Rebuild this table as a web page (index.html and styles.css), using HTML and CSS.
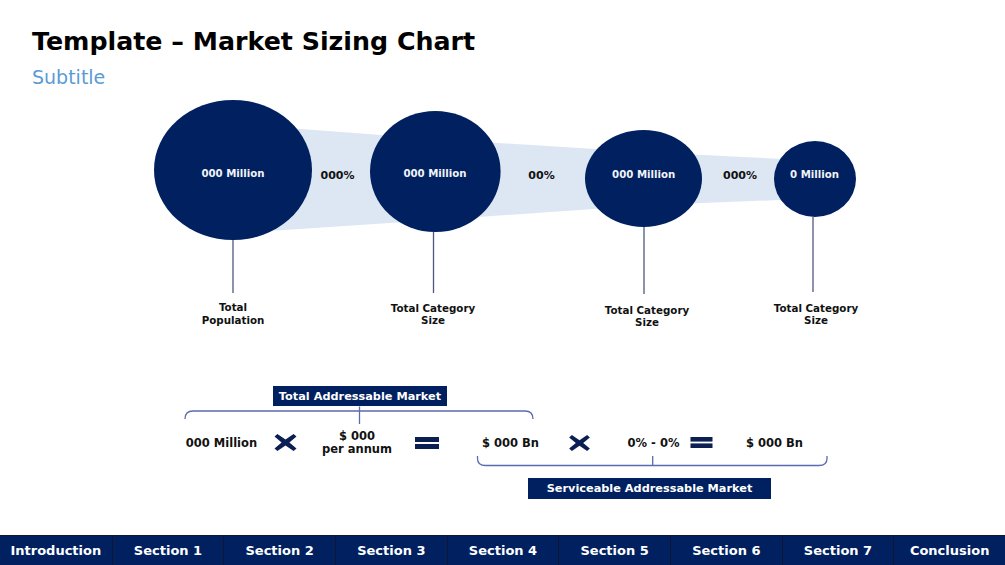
FILE: index.html
```html
<!DOCTYPE html>
<html lang="en">
<head>
<meta charset="utf-8">
<title>Template – Market Sizing Chart</title>
<link rel="stylesheet" href="styles.css">
</head>
<body>
<div class="slide">
  <header class="head">
    <h1 class="title">Template – Market Sizing Chart</h1>
    <p class="subtitle">Subtitle</p>
  </header>

  <div class="funnel">
    <svg class="funnel-svg" width="1005" height="250" viewBox="0 92 1005 250" xmlns="http://www.w3.org/2000/svg">
      <polygon class="band" points="233,124 435,139 643,152 815,160.6 815,198.5 643,205.5 435,220 233,233.5"/>
      <line class="stem" x1="233" y1="240" x2="233" y2="293"/>
      <line class="stem" x1="433.5" y1="232" x2="433.5" y2="293"/>
      <line class="stem" x1="644" y1="227" x2="644" y2="294"/>
      <line class="stem" x1="813" y1="217" x2="813" y2="292"/>
      <ellipse class="node" cx="233" cy="170" rx="79" ry="70"/>
      <ellipse class="node" cx="435.3" cy="171.5" rx="65.3" ry="60.5"/>
      <ellipse class="node" cx="643.5" cy="178.5" rx="58.5" ry="48.5"/>
      <ellipse class="node" cx="815" cy="179" rx="41" ry="38"/>
      <text class="val" x="233" y="177.3">000 Million</text>
      <text class="val" x="435" y="177.3">000 Million</text>
      <text class="val" x="643.7" y="178">000 Million</text>
      <text class="val" x="814.5" y="178">0 Million</text>
      <text class="pct" x="337.5" y="178.5">000%</text>
      <text class="pct" x="541.5" y="178.5">00%</text>
      <text class="pct" x="740" y="178.5">000%</text>
      <text class="lbl" x="233" y="311">Total</text>
      <text class="lbl" x="233" y="323.5">Population</text>
      <text class="lbl" x="433" y="312">Total Category</text>
      <text class="lbl" x="433" y="324.3">Size</text>
      <text class="lbl" x="647" y="313.7">Total Category</text>
      <text class="lbl" x="647" y="326">Size</text>
      <text class="lbl" x="816" y="312">Total Category</text>
      <text class="lbl" x="816" y="324.3">Size</text>
    </svg>
  </div>

  <section class="formula">
    <div class="tag-row">
      <div class="tag tag-tam">Total Addressable Market</div>
    </div>
    <svg class="bracket bracket-top" width="1005" height="22" viewBox="0 406 1005 22" xmlns="http://www.w3.org/2000/svg">
      <path class="brace" d="M185,419 Q185,411 193,411 L525,411 Q533,411 533,419"/>
      <path class="brace" d="M359.5,406.5 V424"/>
    </svg>
    <div class="terms">
      <div class="term term-1">000 Million</div>
      <svg class="op op-x op-x1" width="23" height="17" viewBox="0 0 23 17" xmlns="http://www.w3.org/2000/svg">
        <path class="op-fill" d="M0.5,2.6 L3.4,0 L11.5,5.6 L19.6,0 L22.5,2.6 L15.4,8.5 L22.5,14.4 L19.6,17 L11.5,11.4 L3.4,17 L0.5,14.4 L7.6,8.5 Z"/>
      </svg>
      <div class="term term-3"><span class="term-line">$ 000</span><span class="term-line">per annum</span></div>
      <svg class="op op-eq op-eq1" width="24" height="12" viewBox="0 0 24 12" xmlns="http://www.w3.org/2000/svg">
        <rect class="op-fill" x="0" y="0" width="24" height="5"/>
        <rect class="op-fill" x="0" y="7" width="24" height="5"/>
      </svg>
      <div class="term term-5">$ 000 Bn</div>
      <svg class="op op-x op-x2" width="23" height="16" viewBox="0 0 23 17" xmlns="http://www.w3.org/2000/svg">
        <path class="op-fill" d="M0.5,2.6 L3.4,0 L11.5,5.6 L19.6,0 L22.5,2.6 L15.4,8.5 L22.5,14.4 L19.6,17 L11.5,11.4 L3.4,17 L0.5,14.4 L7.6,8.5 Z"/>
      </svg>
      <div class="term term-7">0% - 0%</div>
      <svg class="op op-eq op-eq2" width="23" height="11" viewBox="0 0 24 12" xmlns="http://www.w3.org/2000/svg">
        <rect class="op-fill" x="0" y="0" width="24" height="5"/>
        <rect class="op-fill" x="0" y="7" width="24" height="5"/>
      </svg>
      <div class="term term-9">$ 000 Bn</div>
    </div>
    <svg class="bracket bracket-bottom" width="1005" height="12" viewBox="0 456 1005 12" xmlns="http://www.w3.org/2000/svg">
      <path class="brace" d="M477.5,456 L477.5,458.5 Q477.5,465.5 485.5,465.5 L819,465.5 Q827,465.5 827,458.5 L827,456"/>
      <path class="brace" d="M652.7,456 V465.5"/>
    </svg>
    <div class="tag-row tag-row-sam">
      <div class="tag tag-sam">Serviceable Addressable Market</div>
    </div>
  </section>

  <nav class="nav">
    <div class="nav-item">Introduction</div>
    <div class="nav-item">Section 1</div>
    <div class="nav-item">Section 2</div>
    <div class="nav-item">Section 3</div>
    <div class="nav-item">Section 4</div>
    <div class="nav-item">Section 5</div>
    <div class="nav-item">Section 6</div>
    <div class="nav-item">Section 7</div>
    <div class="nav-item">Conclusion</div>
  </nav>
</div>
</body>
</html>
```

FILE: styles.css
```css
* {
  box-sizing: border-box;
}

html, body {
  margin: 0;
  padding: 0;
  background: #ffffff;
}

body {
  font-family: "DejaVu Sans", Verdana, sans-serif;
  color: #111111;
}

.slide {
  width: 1005px;
  height: 565px;
  display: flex;
  flex-direction: column;
  overflow: hidden;
}

/* header */
.head {
  padding: 27px 0 0 32px;
}

.title {
  margin: 0;
  font-size: 25.3px;
  line-height: 30px;
  font-weight: bold;
  color: #000000;
}

.subtitle {
  margin: 8px 0 0 0;
  font-size: 19px;
  line-height: 24px;
  color: #5b9bd5;
}

/* funnel diagram */
.funnel {
  margin-top: 3px;
  height: 250px;
}

.funnel-svg {
  display: block;
}

.band {
  fill: #dde7f3;
}

.node {
  fill: #002060;
}

.stem {
  stroke: #4d5a7d;
  stroke-width: 1.3;
}

.funnel-svg text {
  font-family: "DejaVu Sans", Verdana, sans-serif;
  font-weight: bold;
  text-anchor: middle;
}

.val {
  font-size: 10.2px;
  fill: #f2f4f8;
}

.pct {
  font-size: 11px;
  fill: #111111;
}

.lbl {
  font-size: 10.3px;
  fill: #111111;
}

/* formula */
.formula {
  margin-top: 44px;
}

.tag-row {
  display: flex;
}

.tag {
  color: #ffffff;
  background: #002060;
  font-weight: bold;
  font-size: 11.3px;
  display: flex;
  align-items: center;
  justify-content: center;
  white-space: nowrap;
}

.tag-tam {
  margin-left: 273px;
  width: 174px;
  height: 20px;
}

.tag-row-sam {
  margin-top: 10px;
}

.tag-sam {
  margin-left: 528px;
  width: 243px;
  height: 21px;
}

.bracket {
  display: block;
}

.brace {
  fill: none;
  stroke: #5c6ab0;
  stroke-width: 1.3;
}

.terms {
  display: flex;
  align-items: center;
  height: 28px;
  padding-top: 1px;
}

.term {
  font-weight: bold;
  font-size: 11.5px;
  line-height: 14px;
  text-align: center;
  white-space: nowrap;
  color: #111111;
}

.term-line {
  display: block;
  line-height: 12.2px;
}

.term-1 { width: 80px; margin-left: 181.5px; }
.op-x1 { margin-left: 12.5px; }
.term-3 { width: 90px; margin-left: 15px; }
.op-eq1 { margin-left: 13px; }
.term-5 { width: 70px; margin-left: 36.5px; }
.op-x2 { margin-left: 22.5px; }
.term-7 { width: 66px; margin-left: 29.5px; }
.op-eq2 { margin-left: 3.5px; }
.term-9 { width: 70px; margin-left: 26.5px; }

.op {
  display: block;
  flex: none;
}

.op-fill {
  fill: #0b1f52;
}

/* navigation */
.nav {
  margin-top: auto;
  height: 30px;
  display: grid;
  grid-template-columns: repeat(9, 1fr);
  background: #002060;
  border-top: 1px solid #0d1733;
}

.nav-item {
  display: flex;
  align-items: center;
  justify-content: center;
  color: #ffffff;
  font-weight: bold;
  font-size: 13px;
  border-left: 1px solid #0d1733;
  white-space: nowrap;
}

.nav-item:first-child {
  border-left: none;
}
```
